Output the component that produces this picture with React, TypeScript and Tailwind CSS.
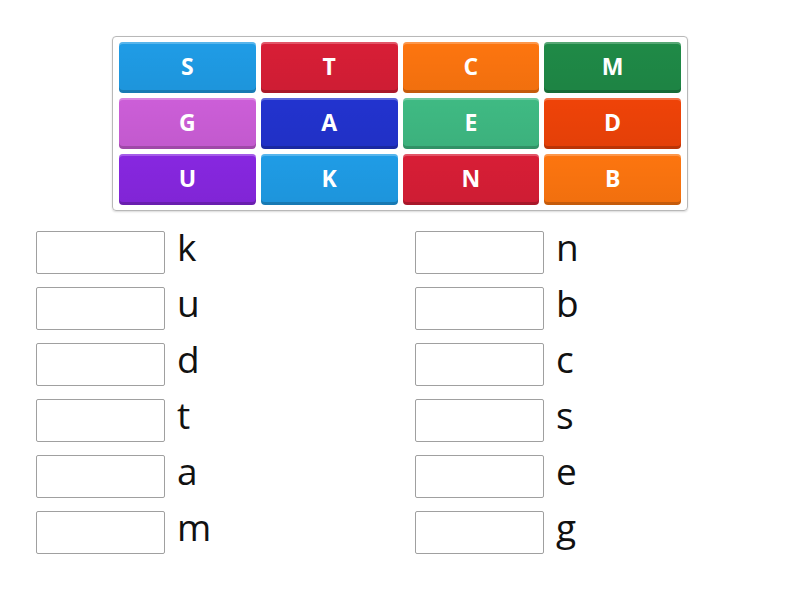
const tiles = [
    { label: 'S', bg: 'bg-[#1f9ce6]' },
    { label: 'T', bg: 'bg-[#d81e36]' },
    { label: 'C', bg: 'bg-[#fd750f]' },
    { label: 'M', bg: 'bg-[#1f8a47]' },
    { label: 'G', bg: 'bg-[#cc5ed8]' },
    { label: 'A', bg: 'bg-[#2233cf]' },
    { label: 'E', bg: 'bg-[#3fba83]' },
    { label: 'D', bg: 'bg-[#ef4308]' },
    { label: 'U', bg: 'bg-[#8727e0]' },
    { label: 'K', bg: 'bg-[#1f9ce6]' },
    { label: 'N', bg: 'bg-[#d81e36]' },
    { label: 'B', bg: 'bg-[#fd750f]' },
];

const left = ['k', 'u', 'd', 't', 'a', 'm'];
const right = ['n', 'b', 'c', 's', 'e', 'g'];

const Tile = ({ label, bg }: { label: string; bg: string }) => (
    <div
        className={`${bg} h-[51px] rounded-[4px] flex items-center justify-center pb-[2px] text-white text-[23px] font-bold
        shadow-[inset_0_2px_0_rgba(255,255,255,0.25),inset_0_-3px_0_rgba(0,0,0,0.18)] bg-linear-to-b from-white/0 to-black/5`}
    >
        {label}
    </div>
);

const AnswerRow = ({ letter }: { letter: string }) => (
    <div className="flex items-start h-[43px]">
        <div className="w-[129px] h-[43px] border border-[#a0a0a0] rounded-[2px] bg-white" />
        <span className="ml-[12px] text-[37px] leading-[43px] text-[#111] -mt-[6px]">{letter}</span>
    </div>
);

export default function App() {
    return (
        <div className="w-[800px] h-[600px] bg-white font-['Open_Sans',sans-serif]">
            <div className="pt-[36px]">
                <div className="mx-auto w-[576px] border border-[#b8b8b8] rounded-[4px] px-[6px] py-[5px] grid grid-cols-4 gap-x-[5px] gap-y-[5px] shadow-[0_1px_2px_rgba(0,0,0,0.15)]">
                    {tiles.map((t, i) => (
                        <Tile key={i} label={t.label} bg={t.bg} />
                    ))}
                </div>
            </div>
            <div className="flex pl-[36px] pt-[20px]">
                <div className="w-[379px] flex flex-col gap-[13px]">
                    {left.map((l) => (
                        <AnswerRow key={l} letter={l} />
                    ))}
                </div>
                <div className="w-[379px] flex flex-col gap-[13px]">
                    {right.map((l) => (
                        <AnswerRow key={l} letter={l} />
                    ))}
                </div>
            </div>
        </div>
    );
}
